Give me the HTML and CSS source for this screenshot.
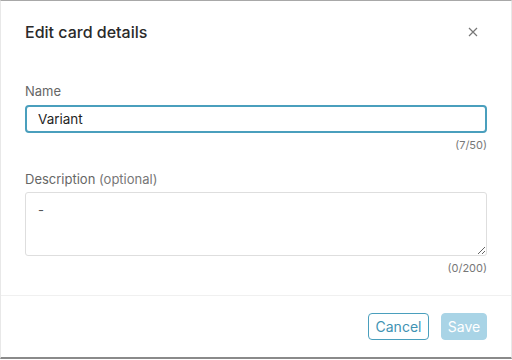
FILE: index.html
```html
<!DOCTYPE html>
<html lang="en">
  <head>
    <meta charset="UTF-8" />
    <title>Edit card details</title>
    <link rel="stylesheet" href="styles.css">
  </head>
  <body>
    <div class="dialog">
      <div class="dialog-header">
        <h2 class="dialog-title">Edit card details</h2>
        <button class="close-btn" aria-label="Close">
          <svg width="10" height="10" viewBox="0 0 10 10">
            <path d="M1 1L9 9M9 1L1 9" stroke="#777" stroke-width="1.2" fill="none" />
          </svg>
        </button>
      </div>

      <div class="dialog-body">
        <!-- Name -->
        <label class="field-label" for="cardName">Name</label>
        <input class="text-input" id="cardName" type="text" value="Variant" />
        <div class="counter">(7/50)</div>

        <!-- Description -->
        <label class="field-label field-label-gap" for="cardDesc">Description <span class="optional">(optional)</span></label>
        <textarea class="text-area" id="cardDesc">-</textarea>
        <div class="counter">(0/200)</div>
      </div>

      <div class="dialog-footer">
        <button class="btn btn-outline">Cancel</button>
        <button class="btn btn-primary" disabled>Save</button>
      </div>
    </div>
  </body>
</html>
```

FILE: styles.css
```css
:root {
  --teal: #4a9fbd;
  --teal-text: #3f93b3;
  --teal-light: #a9d4e6;
  --text: #2b2b2b;
  --muted: #666;
}

* {
  box-sizing: border-box;
}

body {
  margin: 0;
  background: #fff;
  font-family: Inter, "Noto Sans", sans-serif;
  color: var(--text);
}

.dialog {
  width: 512px;
  height: 359px;
  background: #fff;
  border-top: 1px solid #a8a8a8;
  border-left: 1px solid #e8e8e8;
  border-right: 1px solid #e8e8e8;
  border-bottom: 2px solid #8a8a8a;
  display: flex;
  flex-direction: column;
}

.dialog-header {
  height: 61px;
  padding: 0 24px;
  display: flex;
  align-items: center;
  justify-content: space-between;
}

.dialog-title {
  margin: 0;
  font-size: 16px;
  font-weight: 500;
  color: #2a2a2a;
}

.close-btn {
  border: none;
  background: none;
  padding: 0;
  margin-right: 9px;
  width: 10px;
  height: 10px;
  display: flex;
  cursor: pointer;
}

.dialog-body {
  padding: 21px 24px 0;
  flex: 1;
  display: flex;
  flex-direction: column;
}

.field-label {
  display: block;
  font-size: 13px;
  line-height: 16px;
  color: var(--muted);
  margin-bottom: 6px;
}

.field-label-gap {
  margin-top: 19px;
  margin-bottom: 5px;
}

.optional {
  color: #777;
}

.text-input {
  width: 100%;
  height: 28px;
  border: 2px solid var(--teal);
  border-radius: 4px;
  padding: 0 11px;
  font-family: inherit;
  font-size: 13.5px;
  color: #1f1f1f;
  outline: none;
}

.text-area {
  width: 100%;
  height: 64px;
  border: 1px solid #dedede;
  border-radius: 3px;
  padding: 9px 12px;
  font-family: inherit;
  font-size: 13px;
  color: #555;
  resize: vertical;
  outline: none;
}

.counter {
  text-align: right;
  font-size: 11px;
  line-height: 14px;
  margin-top: 5px;
  color: #777;
}

.dialog-footer {
  border-top: 1px solid #f0f0f0;
  padding: 17px 24px 0;
  height: 62px;
  display: flex;
  justify-content: flex-end;
  align-items: flex-start;
  gap: 12px;
}

.btn {
  height: 27px;
  padding: 0;
  font-family: inherit;
  font-size: 14px;
  border-radius: 4px;
  cursor: pointer;
}

.btn-outline {
  width: 61px;
  background: #fff;
  border: 1px solid var(--teal);
  color: var(--teal-text);
}

.btn-primary {
  width: 46px;
  background: var(--teal-light);
  border: 1px solid var(--teal-light);
  color: #fff;
}
```
